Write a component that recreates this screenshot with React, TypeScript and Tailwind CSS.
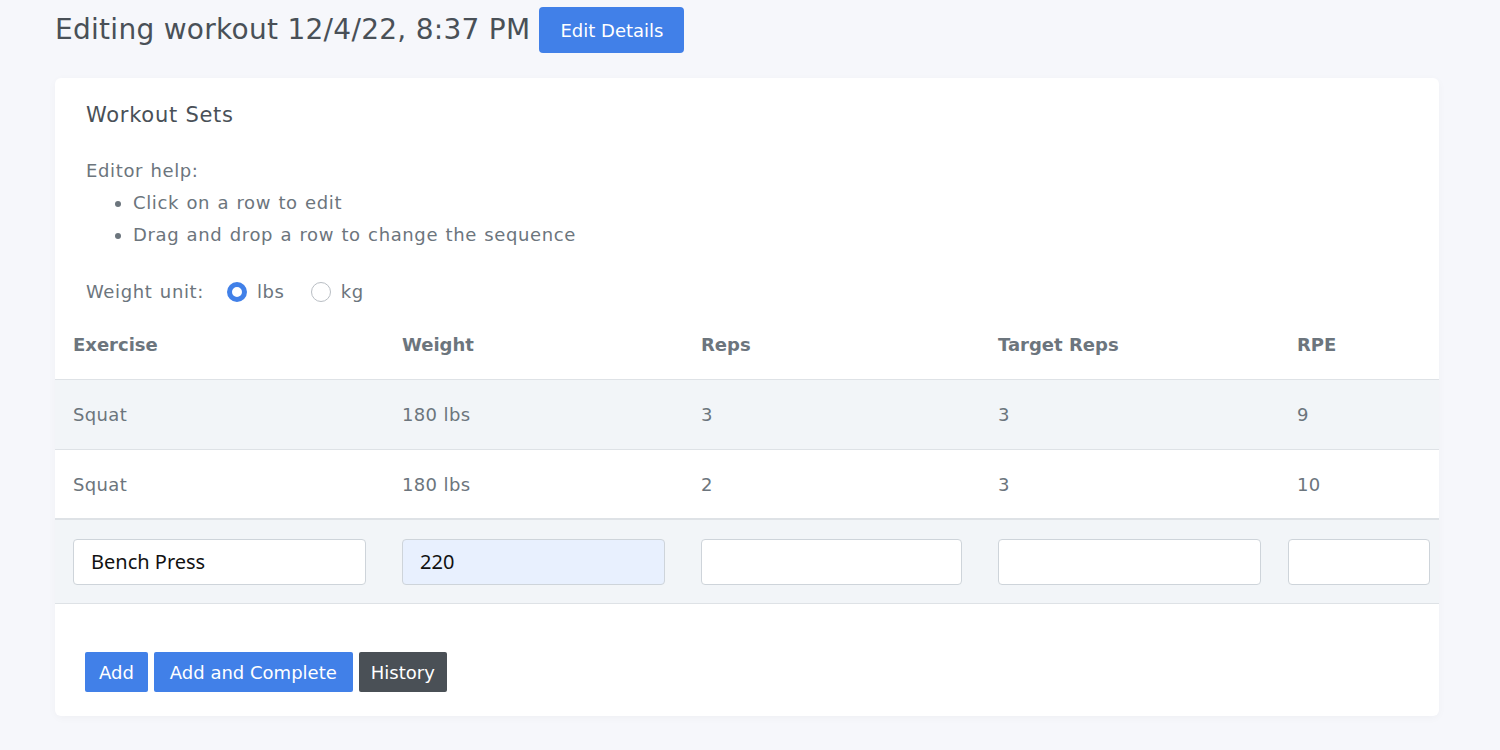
import React, { useState } from 'react';

type SetRow = { exercise: string; weight: string; reps: string; target: string; rpe: string };

const rows: SetRow[] = [
  { exercise: 'Squat', weight: '180 lbs', reps: '3', target: '3', rpe: '9' },
  { exercise: 'Squat', weight: '180 lbs', reps: '2', target: '3', rpe: '10' },
];

const cols = 'grid grid-cols-[329px_299px_297px_299px_160px]';

export default function App() {
  const [unit, setUnit] = useState<'lbs' | 'kg'>('lbs');

  return (
    <div className="min-h-[750px] bg-[#f6f7fb] font-['DejaVu_Sans',sans-serif] text-[#6c757d]">
      <div className="px-[55px] pt-[7px]">
        <div className="flex items-center gap-[9px]">
          <h1 className="text-[28px] leading-[46px] tracking-[0.01em] text-[#495057]">Editing workout 12/4/22, 8:37 PM</h1>
          <button className="h-[46px] rounded-[4px] bg-[#4180e8] px-[21px] text-[18px] text-white">Edit Details</button>
        </div>

        {/* card */}
        <div className="mt-[25px] w-[1384px] rounded-[6px] bg-white shadow-[0_2px_8px_rgba(0,0,0,0.03)]">
          <div className="px-[31px] pt-[22px]">
            <h2 className="text-[21px] leading-[30px] tracking-[0.035em] text-[#495057]">Workout Sets</h2>
            <div className="mt-[25px] text-[18px] leading-[32px] tracking-[0.035em] [word-spacing:1px]">
              <p>Editor help:</p>
              <ul className="list-disc pl-[47px] marker:text-[#6c757d]">
                <li>Click on a row to edit</li>
                <li>Drag and drop a row to change the sequence</li>
              </ul>
            </div>
            <div className="mt-[25px] flex items-center text-[18px] leading-[32px] tracking-[0.035em] [word-spacing:1px]">
              <span>Weight unit:</span>
              <label className="ml-[23px] flex items-center gap-[10px]">
                <span
                  onClick={() => setUnit('lbs')}
                  className={
                    unit === 'lbs'
                      ? 'h-[20px] w-[20px] rounded-full border-[5px] border-[#4180e8] bg-white'
                      : 'h-[20px] w-[20px] rounded-full border border-[#b9bec4] bg-white'
                  }
                />
                lbs
              </label>
              <label className="ml-[26px] flex items-center gap-[10px]">
                <span
                  onClick={() => setUnit('kg')}
                  className={
                    unit === 'kg'
                      ? 'h-[20px] w-[20px] rounded-full border-[5px] border-[#4180e8] bg-white'
                      : 'h-[20px] w-[20px] rounded-full border border-[#b9bec4] bg-white'
                  }
                />
                kg
              </label>
            </div>
          </div>

          {/* table */}
          <div className="mt-[12px] text-[18px]">
            <div className={`${cols} h-[60px] items-center border-b border-[#dee2e6] pb-[10px] font-bold text-[#6c757d]`}>
              <div className="px-[18px]">Exercise</div>
              <div className="px-[18px]">Weight</div>
              <div className="px-[18px]">Reps</div>
              <div className="px-[18px]">Target Reps</div>
              <div className="px-[18px]">RPE</div>
            </div>
            {rows.map((r, i) => (
              <div
                key={i}
                className={`${cols} h-[70px] items-center border-[#dee2e6] tracking-[0.02em] ${i % 2 === 0 ? 'border-b bg-[#f2f5f8]' : 'border-b-2 bg-white'}`}
              >
                <div className="px-[18px]">{r.exercise}</div>
                <div className="px-[18px]">{r.weight}</div>
                <div className="px-[18px]">{r.reps}</div>
                <div className="px-[18px]">{r.target}</div>
                <div className="px-[18px]">{r.rpe}</div>
              </div>
            ))}
            <div className={`${cols} h-[84px] items-center border-b border-[#dee2e6] bg-[#f2f5f8] font-['Noto_Sans',sans-serif] text-[20px] text-[#111]`}>
              <div className="px-[18px]">
                <input defaultValue="Bench Press" className="h-[46px] w-full rounded-[4px] border border-[#ced4da] bg-white px-[17px] outline-none" />
              </div>
              <div className="px-[18px]">
                <input defaultValue="220" className="h-[46px] w-[263px] rounded-[4px] border border-[#ced4da] bg-[#e8f0fe] px-[17px] outline-none" />
              </div>
              <div className="px-[18px]">
                <input className="h-[46px] w-[261px] rounded-[4px] border border-[#ced4da] bg-white px-[17px] outline-none" />
              </div>
              <div className="px-[18px]">
                <input className="h-[46px] w-[263px] rounded-[4px] border border-[#ced4da] bg-white px-[17px] outline-none" />
              </div>
              <div className="pl-[9px]">
                <input className="h-[46px] w-[142px] rounded-[4px] border border-[#ced4da] bg-white px-[17px] outline-none" />
              </div>
            </div>
          </div>

          <div className="flex gap-[6px] px-[30px] pb-[24px] pt-[48px] text-[18px] text-white">
            <button className="h-[40px] rounded-[2px] bg-[#4180e8] px-[14px]">Add</button>
            <button className="h-[40px] rounded-[2px] bg-[#4180e8] px-[16px]">Add and Complete</button>
            <button className="h-[40px] rounded-[2px] bg-[#4a5056] px-[12px]">History</button>
          </div>
        </div>
      </div>
    </div>
  );
}
